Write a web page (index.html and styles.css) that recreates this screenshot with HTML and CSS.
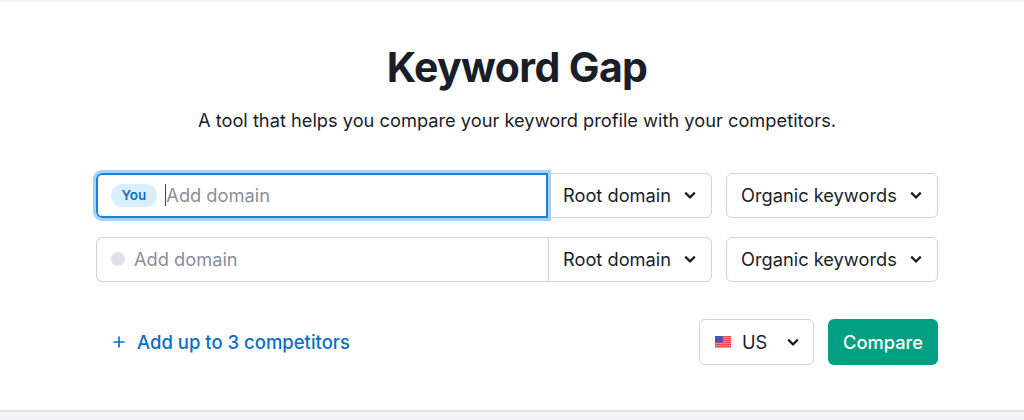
FILE: index.html
```html
<!DOCTYPE html>
<html lang="en">
<head>
<meta charset="utf-8">
<title>Keyword Gap</title>
<link rel="stylesheet" href="styles.css">
</head>
<body>
<main class="card">
  <h1 class="title">Keyword Gap</h1>
  <p class="subtitle">A tool that helps you compare your keyword profile with your competitors.</p>
  <form class="form">
    <div class="row">
      <div class="domain-group">
        <div class="domain domain-focus">
          <span class="you">You</span>
          <span class="caret"></span>
          <span class="placeholder">Add domain</span>
        </div>
        <button type="button" class="select select-joined"><span>Root domain</span>
          <svg class="chev" viewBox="0 0 12 8"><path d="M1.2 1.6 6 6.4l4.8-4.8"/></svg></button>
      </div>
      <button type="button" class="select select-kw"><span>Organic keywords</span>
        <svg class="chev" viewBox="0 0 12 8"><path d="M1.2 1.6 6 6.4l4.8-4.8"/></svg></button>
    </div>
    <div class="row">
      <div class="domain-group">
        <div class="domain">
          <span class="dot"></span>
          <span class="placeholder">Add domain</span>
        </div>
        <button type="button" class="select select-joined"><span>Root domain</span>
          <svg class="chev" viewBox="0 0 12 8"><path d="M1.2 1.6 6 6.4l4.8-4.8"/></svg></button>
      </div>
      <button type="button" class="select select-kw"><span>Organic keywords</span>
        <svg class="chev" viewBox="0 0 12 8"><path d="M1.2 1.6 6 6.4l4.8-4.8"/></svg></button>
    </div>
    <div class="actions">
      <a class="add" href="#">
        <svg class="plus" viewBox="0 0 12 12"><path d="M6 .5v11M.5 6h11"/></svg>
        <span>Add up to 3 competitors</span>
      </a>
      <div class="actions-right">
        <button type="button" class="select select-country">
          <svg class="flag" viewBox="0 0 16 12">
            <rect width="16" height="12" fill="#fbb"/>
            <path d="M0 .5h16M0 2.5h16M0 4.5h16M0 6.5h16M0 8.5h16M0 10.5h16" stroke="#f04848" stroke-width="1.3"/>
            <rect width="8" height="6.5" fill="#4a55b8"/>
          </svg>
          <span class="country-name">US</span>
          <svg class="chev" viewBox="0 0 12 8"><path d="M1.2 1.6 6 6.4l4.8-4.8"/></svg>
        </button>
        <button type="button" class="compare">Compare</button>
      </div>
    </div>
  </form>
</main>
</body>
</html>
```
FILE: styles.css
```css
* { box-sizing: border-box; }
html, body { margin: 0; height: 100%; }
body {
  background: #f4f4f8;
  font-family: Inter, "Liberation Sans", sans-serif;
  color: #191e28;
  overflow: hidden;
  padding-top: 2px;
}
.card {
  height: 410px;
  background: #fff;
  border-bottom: 2px solid #e4e4ea;
  padding: 0 86px 0 96px;
  display: flex;
  flex-direction: column;
}
.title {
  margin: 37px 0 0;
  height: 56px;
  font-size: 41px;
  line-height: 56px;
  font-weight: 700;
  text-align: center;
  letter-spacing: -0.6px;
}
.subtitle {
  margin: 13px 0 0;
  height: 24px;
  font-size: 18.25px;
  line-height: 24px;
  text-align: center;
}
.form { margin-top: 40.5px; display: flex; flex-direction: column; }
.row { display: flex; gap: 14px; height: 45px; margin-bottom: 19px; }
.domain-group { display: flex; width: 616px; }
.domain {
  flex: 0 0 452px;
  display: flex;
  align-items: center;
  border: 1px solid #d1d1db;
  border-right: 0;
  border-radius: 6px 0 0 6px;
  padding-left: 14px;
  background: #fff;
}
.domain-focus {
  border: 2px solid #1a80d8;
  border-radius: 6px 0 0 6px;
  outline: 3px solid #a5d2fb;
  outline-offset: 0;
  padding-left: 13px;
  position: relative;
  z-index: 1;
}
.you {
  background: #d9eefe;
  color: #0a6fc4;
  font-size: 13.5px;
  font-weight: 600;
  line-height: 23px;
  height: 23px;
  padding: 0 10.5px;
  border-radius: 12px;
}
.caret { width: 1px; height: 22px; background: #3d4450; margin-left: 8.5px; }
.placeholder { font-size: 18.25px; color: #8a8e9b; }
.dot {
  width: 14px;
  height: 14px;
  border-radius: 50%;
  background: #e0e0e9;
  margin-right: 9px;
}
.select {
  display: flex;
  align-items: center;
  justify-content: space-between;
  background: #fff;
  border: 1px solid #d1d1db;
  border-radius: 6px;
  font: inherit;
  font-size: 18.25px;
  color: #191e28;
  padding: 0 14px;
  height: 45px;
}
.select-joined {
  flex: 1;
  border-radius: 0 6px 6px 0;
  padding-right: 15px;
}
.select-kw { width: 212px; padding-right: 15px; }
.chev { width: 12px; height: 8px; flex: none; }
.chev path { fill: none; stroke: #191e28; stroke-width: 2.2; }
.actions {
  display: flex;
  justify-content: space-between;
  align-items: center;
  height: 46px;
  margin-top: 18px;
}
.add {
  display: flex;
  align-items: center;
  gap: 12px;
  margin-left: 17px;
  color: #0a6fc4;
  font-size: 18.5px;
  font-weight: 500;
  text-decoration: none;
}
.plus { width: 12px; height: 12px; }
.plus path { stroke: #0a6fc4; stroke-width: 1.7; fill: none; }
.actions-right { display: flex; gap: 14px; }
.select-country { width: 115px; height: 46px; padding: 0 14px 0 15px; }
.flag { width: 16px; height: 12px; flex: none; }
.country-name { margin-left: 11px; margin-right: auto; }
.compare {
  width: 110px;
  height: 46px;
  background: #009f81;
  color: #fff;
  border: 0;
  border-radius: 6px;
  font: inherit;
  font-size: 18.25px;
  font-weight: 500;
}
```
